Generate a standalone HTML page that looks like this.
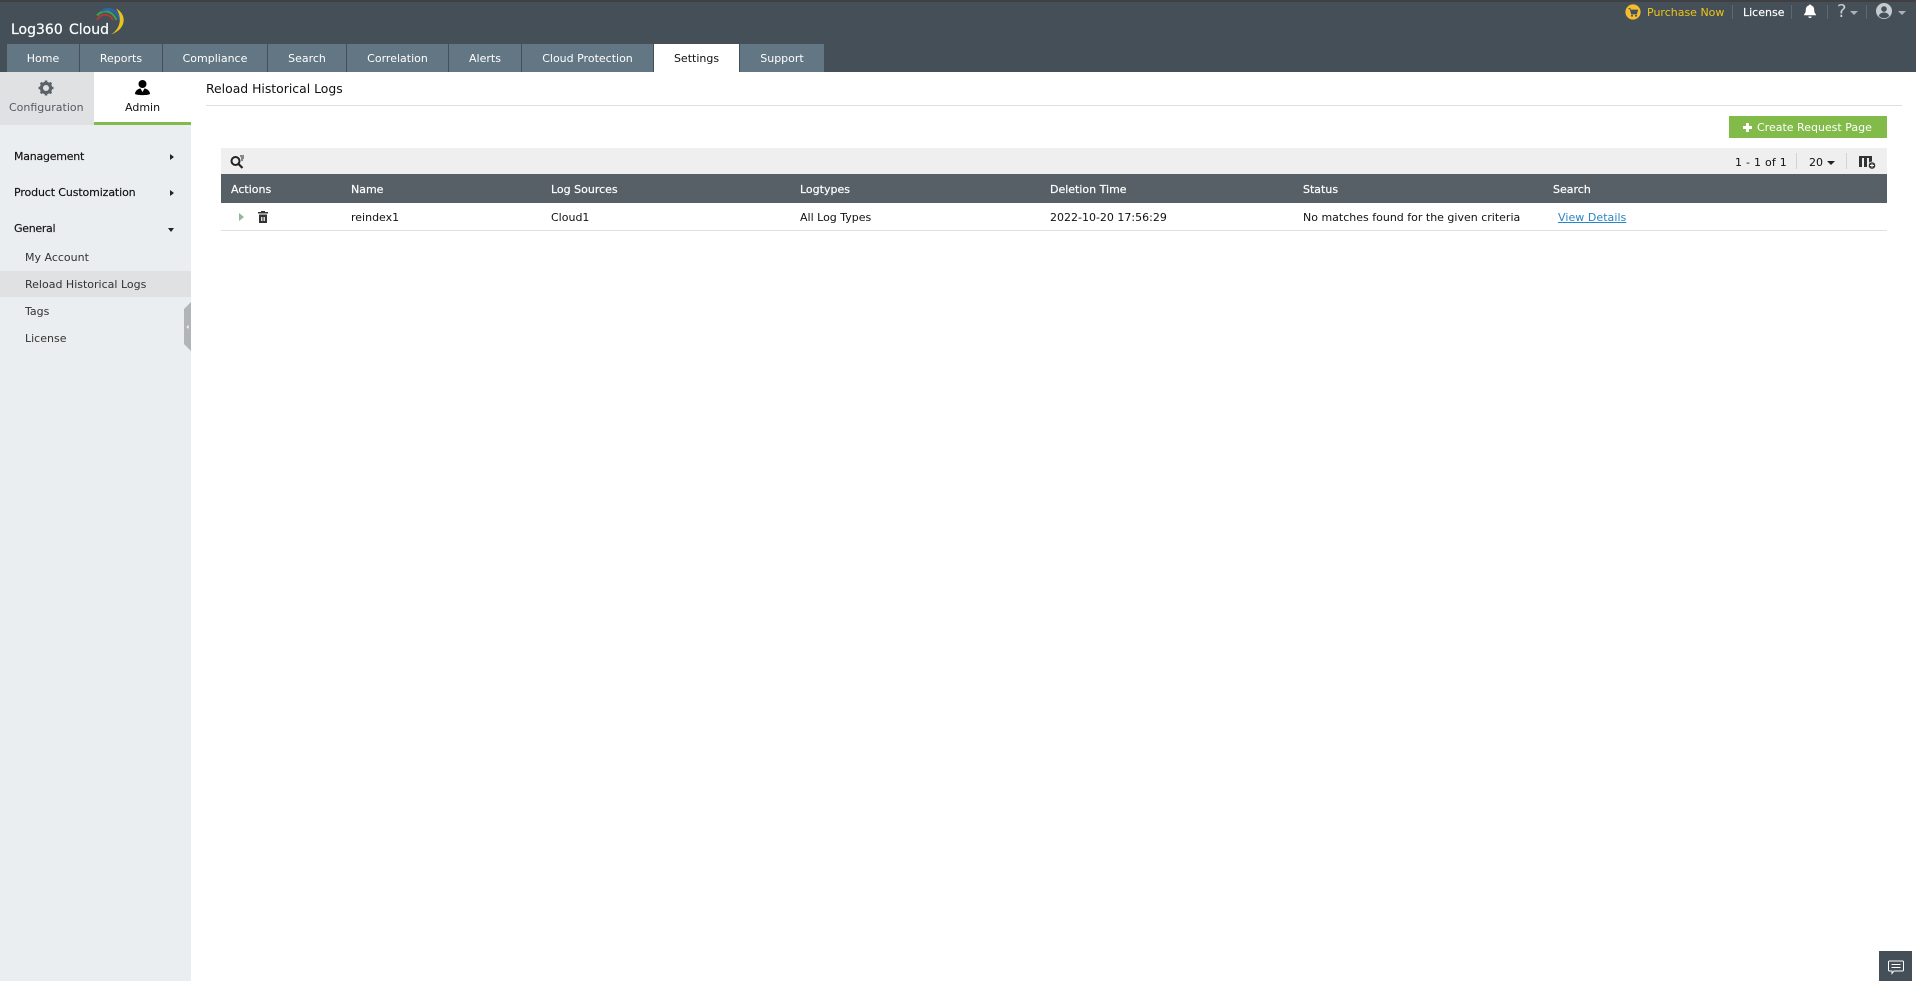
<!DOCTYPE html>
<html><head><meta charset="utf-8"><title>Log360 Cloud</title>
<style>
html,body{margin:0;padding:0;width:1916px;height:981px;overflow:hidden;background:#fff}
body{position:relative;font-family:"DejaVu Sans",sans-serif;font-size:11px;color:#222}
.a{position:absolute;white-space:nowrap;line-height:14px}
.b{position:absolute}
.tab{position:absolute;top:44px;height:28px;background:#627683;color:#fff;text-align:center;line-height:29px;font-size:11px}
.th{position:absolute;top:183px;color:#fff;line-height:14px;white-space:nowrap;font-size:11px;-webkit-text-stroke:.2px #fff}
.td{position:absolute;top:211px;color:#111;line-height:14px;white-space:nowrap;font-size:11px}
.h{-webkit-text-stroke:.15px #111}
svg{position:absolute;overflow:visible}
</style></head><body>
<div class="b" style="left:0;top:0;width:1916px;height:72px;background:#444f58"></div>
<div class="b" style="left:0;top:0;width:1916px;height:2px;background:#3f3f44"></div>

<div class="a" style="left:11px;top:21px;font-size:14px;line-height:18px;color:#fff;-webkit-text-stroke:.2px #fff">Log360</div>
<div class="a" style="left:69px;top:21px;font-size:14px;line-height:18px;color:#fff;-webkit-text-stroke:.2px #fff">Cloud</div>
<svg style="left:0;top:0" width="130" height="40" fill="none">
<path d="M97 20 C101 13 109 13 113 20" stroke="#b03a3a" stroke-width="2"/>
<path d="M97 15.500 C103 9 112 10 116.500 20" stroke="#3e9b4f" stroke-width="2.200"/>
<path d="M102 11 C109 7 117 10 120 20" stroke="#2767b1" stroke-width="2.400"/>
<path d="M116 8.500 C127 14 127 29 111 34.500 C120 29 123 18 116 8.500z" fill="#e8c31c"/>
</svg>

<div class="tab" style="left:7px;width:72px">Home</div>
<div class="tab" style="left:80px;width:82px">Reports</div>
<div class="tab" style="left:163px;width:104px">Compliance</div>
<div class="tab" style="left:268px;width:78px">Search</div>
<div class="tab" style="left:347px;width:101px">Correlation</div>
<div class="tab" style="left:449px;width:72px">Alerts</div>
<div class="tab" style="left:522px;width:131px">Cloud Protection</div>
<div class="tab" style="left:654px;width:85px;background:#fff;color:#111">Settings</div>
<div class="tab" style="left:740px;width:84px">Support</div>

<svg style="left:1625px;top:4px" width="16" height="16"><circle cx="8" cy="8" r="7.600" fill="#f4bd2e"/><path d="M3.500 4.500h1.600l1.400 5.500h5l1.200-4H5.600" fill="#444f58" stroke="#444f58" stroke-width=".8"/><circle cx="7" cy="11.800" r="1" fill="#444f58"/><circle cx="11" cy="11.800" r="1" fill="#444f58"/></svg>
<div class="a" style="left:1647px;top:6px;color:#f0c419">Purchase Now</div>
<div class="b" style="left:1732px;top:5px;width:1px;height:14px;background:#5c6870"></div>
<div class="a" style="left:1743px;top:6px;color:#fff;-webkit-text-stroke:.15px #fff">License</div>
<div class="b" style="left:1791px;top:5px;width:1px;height:14px;background:#5c6870"></div>
<svg style="left:1802px;top:3px" width="16" height="16"><path d="M8 1.500c.8 0 1.200.5 1.200 1 2.300.6 3 2.500 3 4.500 0 2.500 1 3.500 1.800 4.500v.8H2v-.8C2.800 10.500 3.800 9.500 3.800 7c0-2 .7-3.900 3-4.500 0-.5.4-1 1.200-1z" fill="#fff"/><path d="M6.300 13.500h3.400a1.700 1.500 0 0 1-3.400 0z" fill="#fff"/></svg>
<div class="b" style="left:1827px;top:5px;width:1px;height:14px;background:#5c6870"></div>
<div class="a" style="left:1837px;top:2px;font-size:18px;line-height:20px;color:#c9ced2">?</div>
<div class="b" style="left:1850px;top:11px;border:4px solid transparent;border-top:4px solid #aab2b8;border-bottom:0"></div>
<div class="b" style="left:1866px;top:5px;width:1px;height:14px;background:#5c6870"></div>
<svg style="left:1876px;top:3px" width="16" height="16"><circle cx="8" cy="8" r="8" fill="#c4cacf"/><circle cx="8" cy="6" r="2.800" fill="#444f58"/><path d="M2.800 13c.8-2.500 2.800-3.500 5.200-3.500s4.400 1 5.200 3.500a7.500 7.500 0 0 1-10.400 0z" fill="#444f58"/></svg>
<div class="b" style="left:1898px;top:11px;border:4px solid transparent;border-top:4px solid #aab2b8;border-bottom:0"></div>

<div class="b" style="left:0;top:72px;width:191px;height:909px;background:#ebeef0"></div>
<div class="b" style="left:0;top:72px;width:94px;height:53px;background:#e0e1e3"></div>
<div class="b" style="left:94px;top:72px;width:97px;height:53px;background:#fff"></div>
<div class="b" style="left:94px;top:122px;width:97px;height:3px;background:#82bb4a"></div>
<svg style="left:38px;top:80px" width="16" height="16"><circle cx="8" cy="8" r="4.600" fill="none" stroke="#5b6268" stroke-width="3.200"/><g stroke="#5b6268" stroke-width="2.600"><path d="M8 .5v3M8 12.500v3M.5 8h3M12.500 8h3M2.700 2.700l2 2M11.300 11.300l2 2M13.300 2.700l-2 2M4.700 11.300l-2 2"/></g></svg>
<div class="a" style="left:9px;top:101px;color:#555c62">Configuration</div>
<svg style="left:134px;top:79px" width="17" height="17"><circle cx="8.500" cy="5" r="4" fill="#000"/><path d="M1 15c0-3 3-5.500 5.500-5.500L8.500 13l2-3.500c2.500 0 5.500 2.500 5.500 5.500-2 1.500-13 1.500-15 0z" fill="#000"/></svg>
<div class="a" style="left:125px;top:101px;color:#111">Admin</div>

<div class="a h" style="left:14px;top:150px;color:#111;letter-spacing:-.24px">Management</div>
<div class="b" style="left:170px;top:154px;border:3.500px solid transparent;border-left:4px solid #222;border-right:0"></div>
<div class="a h" style="left:14px;top:186px;color:#111;letter-spacing:-.12px">Product Customization</div>
<div class="b" style="left:170px;top:190px;border:3.500px solid transparent;border-left:4px solid #222;border-right:0"></div>
<div class="a h" style="left:14px;top:222px;color:#111;letter-spacing:-.3px">General</div>
<div class="b" style="left:168px;top:228px;border:3.500px solid transparent;border-top:4px solid #222;border-bottom:0"></div>
<div class="a" style="left:25px;top:251px;color:#333">My Account</div>
<div class="b" style="left:0;top:271px;width:191px;height:26px;background:#e0e1e3"></div>
<div class="a" style="left:25px;top:278px;color:#333">Reload Historical Logs</div>
<div class="a" style="left:25px;top:305px;color:#333">Tags</div>
<div class="a" style="left:25px;top:332px;color:#333">License</div>
<svg style="left:184px;top:302px" width="7" height="49"><path d="M7 0V49L0 42V7z" fill="#b1b5b7"/><path d="M4.500 23v4l-2-2z" fill="#fff"/></svg>

<div class="a" style="left:206px;top:81px;font-size:12.400px;line-height:15px;color:#111">Reload Historical Logs</div>
<div class="b" style="left:206px;top:105px;width:1696px;height:1px;background:#e0e0e0"></div>

<div class="b" style="left:1729px;top:116px;width:158px;height:22px;background:#82bb4a"></div>
<svg style="left:1743px;top:123px" width="9" height="9"><path d="M3 0h3v3h3v3H6v3H3V6H0V3h3z" fill="#fff"/></svg>
<div class="a" style="left:1757px;top:121px;color:#fff">Create Request Page</div>

<div class="b" style="left:221px;top:148px;width:1666px;height:26px;background:#efefef"></div>
<svg style="left:230px;top:155px" width="16" height="14" fill="none"><circle cx="5.500" cy="6" r="4" stroke="#222" stroke-width="2"/><path d="M8.500 9l4 4" stroke="#222" stroke-width="2.200"/><path d="M10 1h4M11 3h3M11 5h2" stroke="#222" stroke-width=".9"/></svg>
<div class="a" style="left:1735px;top:156px;color:#111;letter-spacing:.25px">1 - 1 of 1</div>
<div class="b" style="left:1796px;top:153px;width:1px;height:16px;background:#d3d3d3"></div>
<div class="a" style="left:1809px;top:156px;color:#111">20</div>
<div class="b" style="left:1827px;top:161px;border:4px solid transparent;border-top:4px solid #222;border-bottom:0"></div>
<div class="b" style="left:1846px;top:153px;width:1px;height:16px;background:#d3d3d3"></div>
<svg style="left:1859px;top:156px" width="18" height="15"><path d="M0 0h13v2H0zM0 2h3v9H0zM5 2h3v9H5zM10 2h3v9h-3z" fill="#333"/><circle cx="13" cy="9.500" r="4" fill="#efefef"/><circle cx="13" cy="9.500" r="3.300" fill="#333"/><path d="M12.500 7.500h1v1.500H15v1h-1.500v1.500h-1V10H11V9h1.500z" fill="#fff"/></svg>

<div class="b" style="left:221px;top:174px;width:1666px;height:29px;background:#576067"></div>
<div class="th" style="left:231px">Actions</div>
<div class="th" style="left:351px">Name</div>
<div class="th" style="left:551px">Log Sources</div>
<div class="th" style="left:800px">Logtypes</div>
<div class="th" style="left:1050px">Deletion Time</div>
<div class="th" style="left:1303px">Status</div>
<div class="th" style="left:1553px">Search</div>

<div class="b" style="left:239px;top:213px;border:4px solid transparent;border-left:5px solid #8dbb98;border-right:0"></div>
<svg style="left:258px;top:211px" width="10" height="12"><path d="M3 0h4v1h3v1.500H0V1h3zM1 3.500h8V12H1z" fill="#333"/><path d="M3.200 6h1.200v4H3.200zM5.600 6h1.200v4H5.600z" fill="#fff"/></svg>
<div class="td" style="left:351px">reindex1</div>
<div class="td" style="left:551px">Cloud1</div>
<div class="td" style="left:800px">All Log Types</div>
<div class="td" style="left:1050px">2022-10-20 17:56:29</div>
<div class="td" style="left:1303px">No matches found for the given criteria</div>
<div class="td" style="left:1558px;color:#2a85c4;text-decoration:underline;letter-spacing:.05px">View Details</div>
<div class="b" style="left:221px;top:230px;width:1666px;height:1px;background:#e0e0e0"></div>

<div class="b" style="left:1879px;top:951px;width:33px;height:30px;background:#444f58"></div>
<svg style="left:1888px;top:960px" width="16" height="15" fill="none"><path d="M1.500 1h13a1 1 0 0 1 1 1v8a1 1 0 0 1-1 1H6l-2 2.500V11H1.500a1 1 0 0 1-1-1V2a1 1 0 0 1 1-1z" stroke="#fff" stroke-width="1"/><path d="M3.500 4.500h9M3.500 7.500h9" stroke="#fff" stroke-width="1"/></svg>
</body></html>
